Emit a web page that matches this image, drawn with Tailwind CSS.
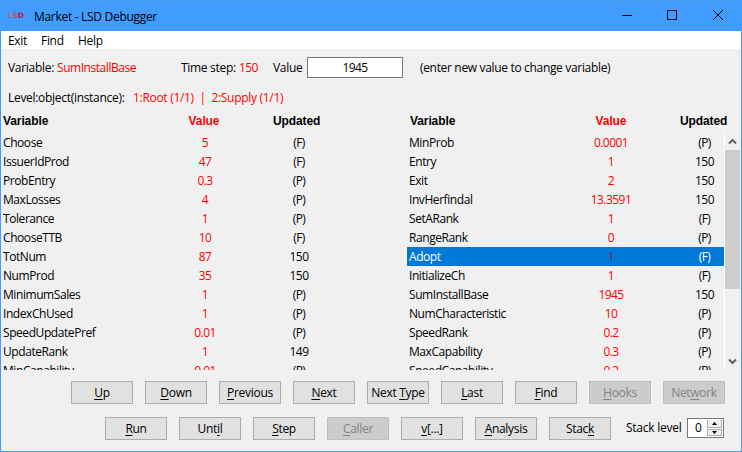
<!DOCTYPE html>
<html lang="en">
<head>
<meta charset="utf-8">
<title>Market - LSD Debugger</title>
<script src="https://cdn.jsdelivr.net/npm/@tailwindcss/browser@4"></script>
</head>
<body class="w-[742px] h-[452px] overflow-hidden bg-[#f0f0f0] text-black text-[12px] leading-[19px] tracking-[-0.3px] whitespace-nowrap font-['Open_Sans','Noto_Sans',sans-serif]">
<div class="flex flex-col w-[742px] h-[452px] border border-t-0 border-[#429cfc]">
  <header class="flex h-[31px] shrink-0 items-center bg-[#419cff] border-t border-[#4f9ff5]">
    <span class="ml-[7px] w-[18px] text-[7.5px] leading-[8px] font-bold tracking-[-0.2px] text-[#a82038] font-['DejaVu_Sans',sans-serif]"><span class="text-[#dc5c68]">L</span><span class="text-[#c44858]">S</span>D</span>
    <h1 class="ml-[8px] tracking-[-0.3px]">Market - LSD Debugger</h1>
    <div class="ml-auto flex pr-[16px] -mt-[3px]">
      <svg width="103" height="12" viewBox="0 0 103 12" fill="none" stroke="#000"><path d="M0 6.500h10M45.500 1.500h9v9h-9z"/><path d="M91 1l10 10M101 1L91 11"/></svg>
    </div>
  </header>
  <nav class="flex h-[18px] shrink-0 items-center gap-[14px] bg-white pl-[7px]">
    <span class="w-[19px]">Exit</span><span class="w-[23px]">Find</span><span>Help</span>
  </nav>
  <section class="flex h-[36px] shrink-0 items-center pl-[7px]">
    <span class="w-[49px]">Variable:</span><span class="w-[124px] tracking-[-0.45px] text-[#ff0000]">SumInstallBase</span>
    <span class="w-[58px]">Time step:</span><span class="w-[34px] tracking-[-0.6px] text-[#ff0000]">150</span><span class="w-[34px]">Value</span>
    <span class="h-[21px] w-[96px] border border-[#7a7a7a] bg-white text-center tracking-[-0.6px]">1945</span>
    <span class="ml-[17px] tracking-[-0.33px]">(enter new value to change variable)</span>
  </section>
  <section class="flex h-[24px] shrink-0 items-center pl-[7px]">
    <span class="w-[125px]">Level:object(instance):</span><span class="text-[#ff0000]">1:Root (1/1)&nbsp; |&nbsp; 2:Supply (1/1)</span>
  </section>
  <section class="flex h-[24px] shrink-0 items-center pt-px font-bold tracking-[-0.1px] font-['Liberation_Sans',Arial,sans-serif] *:shrink-0">
    <span class="w-[153px] pl-[2px]">Variable</span><span class="w-[100px] text-center text-[#ff0000]">Value</span><span class="w-[84px] pl-[19px]">Updated</span>
    <span class="ml-[69px] w-[154px] pl-[3px]">Variable</span><span class="w-[100px] text-center text-[#ff0000]">Value</span><span class="w-[80px] pl-[19px]">Updated</span>
  </section>
  <main class="flex h-[237px] shrink-0 overflow-hidden">
    <div id="left" class="w-[406px]"></div>
    <div id="right" class="w-[317px]"></div>
    <div class="flex w-[17px] flex-col border-l border-white pr-px">
      <div class="grid h-[17px] place-items-center"><svg width="9" height="7" viewBox="0 0 9 7" fill="none" stroke="#606060" stroke-width="2"><path d="M1 5.500l3.500-3.500L8 5.500"/></svg></div>
      <div class="h-[139px] bg-[#cdcdcd]"></div>
      <div class="mt-auto grid h-[17px] place-items-center"><svg width="9" height="7" viewBox="0 0 9 7" fill="none" stroke="#606060" stroke-width="2"><path d="M1 1.500l3.500 3.500L8 1.500"/></svg></div>
    </div>
  </main>
  <div id="row1" class="mt-[11px] flex shrink-0 gap-3 pl-[70px]"></div>
  <div class="mt-[13px] flex shrink-0">
    <div id="row2" class="flex gap-3 pl-[104px]"></div>
    <span class="ml-[15px] mt-px w-[61px] tracking-[-0.25px]">Stack level</span>
    <div class="mt-px flex h-[20px] w-[37px] border border-[#7a7a7a] bg-white">
      <span class="w-[19px] pl-[7px] leading-[17px]">0</span>
      <div class="flex w-[15px] flex-col gap-px py-px">
        <span class="grid h-[8px] place-items-center border border-t-0 border-[#adadad] bg-[#f0f0f0]"><svg width="5" height="3" viewBox="0 0 5 3"><path d="M0 3L2.500 0 5 3z"/></svg></span>
        <span class="grid h-[7px] place-items-center border border-[#adadad] bg-[#f0f0f0]"><svg width="5" height="3" viewBox="0 0 5 3"><path d="M0 0l2.500 3L5 0z"/></svg></span>
      </div>
    </div>
  </div>
</div>
<script>
const left = [['Choose','5','(F)'],['IssuerIdProd','47','(F)'],['ProbEntry','0.3','(P)'],['MaxLosses','4','(P)'],['Tolerance','1','(P)'],['ChooseTTB','10','(F)'],['TotNum','87','150'],['NumProd','35','150'],['MinimumSales','1','(P)'],['IndexChUsed','1','(P)'],['SpeedUpdatePref','0.01','(P)'],['UpdateRank','1','149'],['MinCapability','0.01','(P)']];
const right = [['MinProb','0.0001','(P)'],['Entry','1','150'],['Exit','2','150'],['InvHerfindal','13.3591','150'],['SetARank','1','(F)'],['RangeRank','0','(P)'],['Adopt','1','(F)'],['InitializeCh','1','(F)'],['SumInstallBase','1945','150'],['NumCharacteristic','10','(P)'],['SpeedRank','0.2','(P)'],['MaxCapability','0.3','(P)'],['SpeedCapability','0.2','(P)']];
const row = isRight => ([n, v, u]) => {
  const sel = n === 'Adopt';
  return `<div class="flex h-[19px] *:shrink-0 ${sel ? 'bg-[#0078d7] text-white' : ''}"><span class="w-[154px] pl-[2px] tracking-[-0.43px]">${n}</span><span class="w-[100px] text-center tracking-[-0.55px] ${sel ? 'text-[#80204c]' : 'text-[#ff0000]'}">${v}</span><span class="text-center tracking-[-0.55px] ${isRight ? 'w-[63px] pl-[24px]' : 'w-[88px]'}">${u}</span></div>`;
};
document.getElementById('left').innerHTML = left.map(row(false)).join('');
document.getElementById('right').innerHTML = right.map(row(true)).join('');
// An underscore marks the accelerator letter that follows it; a leading "!" marks a disabled button.
const button = s => {
  const off = s[0] === '!';
  const label = s.replace('!', '').replace(/_(.)/, '<span class="underline underline-offset-2">$1</span>');
  return `<button class="h-[23px] w-[62px] border leading-[21px] ${off ? 'border-[#bfbfbf] bg-[#cccccc] text-[#838383]' : 'border-[#adadad] bg-[#e1e1e1]'}">${label}</button>`;
};
document.getElementById('row1').innerHTML = ['_Up','_Down','_Previous','_Next','Next _Type','_Last','_Find','!_Hooks','!Net_work'].map(button).join('');
document.getElementById('row2').innerHTML = ['_Run','Unt_il','_Step','!_Caller','_v[...]','_Analysis','Stac_k'].map(button).join('');
</script>
</body>
</html>
